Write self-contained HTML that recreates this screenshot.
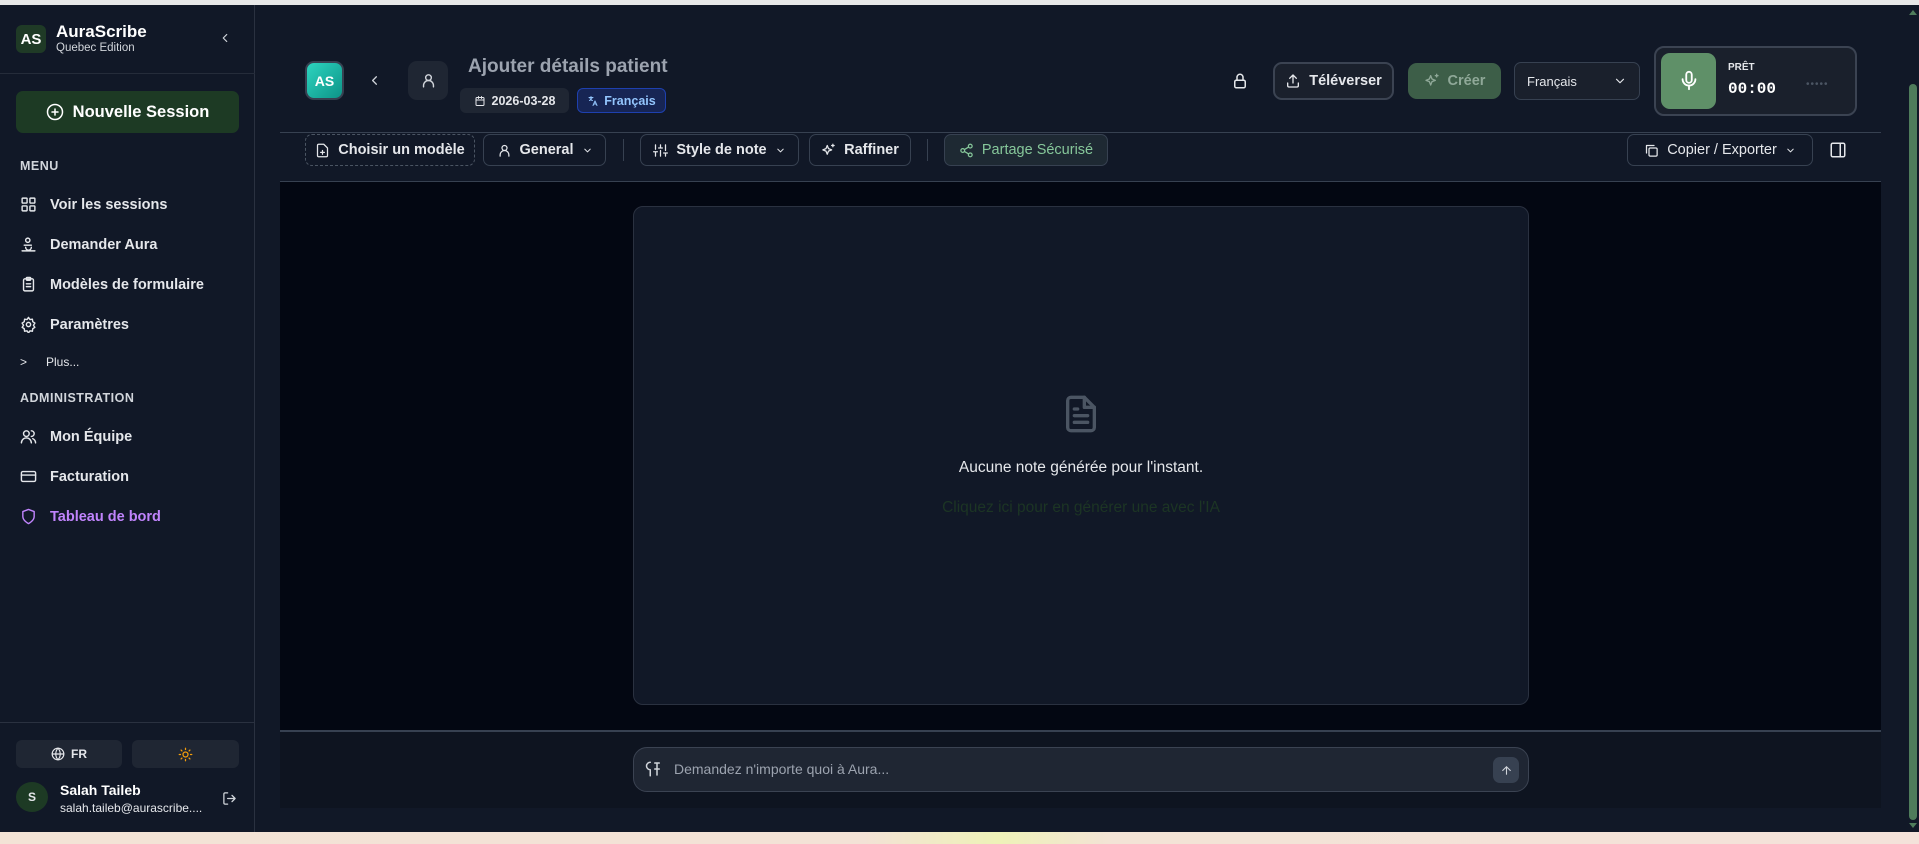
<!DOCTYPE html>
<html><head><meta charset="utf-8"><style>
*{box-sizing:border-box;margin:0;padding:0}
body{width:1919px;height:844px;overflow:hidden;background:#111827;font-family:"Liberation Sans",sans-serif;color:#e5e7eb;position:relative}
.abs{position:absolute}
svg{display:block}
.ic{stroke:currentColor;fill:none;stroke-width:2;stroke-linecap:round;stroke-linejoin:round}
.side{left:0;top:5px;width:255px;height:827px;background:#111827;border-right:1px solid #2a3140}
.nav{position:absolute;left:20px;display:flex;align-items:center;gap:13px;font-size:14.5px;font-weight:bold;color:#e5e7eb}
.sec{position:absolute;left:20px;font-size:12.5px;font-weight:bold;color:#d1d5db;letter-spacing:.5px}
.btn{position:absolute;display:flex;align-items:center;justify-content:center;gap:8px;border:1px solid #374151;border-radius:7px;font-size:14.5px;font-weight:bold;color:#e5e7eb;background:#111827}
</style></head><body>
<div class="abs" style="left:0;top:0;width:1919px;height:5px;background:#e8e8e8"></div>
<div class="abs" style="left:0;top:832px;width:1919px;height:12px;background:linear-gradient(90deg,#f3e3d6 0%,#f3e2d6 45%,#eef2b8 52%,#f3e3d6 58%,#f4e2da 100%)"></div>

<div class="abs side">
 <div class="abs" style="left:16px;top:20px;width:30px;height:28px;background:#1f3a26;border-radius:6px;color:#fff;font-weight:bold;font-size:15px;display:flex;align-items:center;justify-content:center">AS</div>
 <div class="abs" style="left:56px;top:17px;font-size:17px;font-weight:bold;color:#fff">AuraScribe</div>
 <div class="abs" style="left:56px;top:37px;font-size:11.5px;color:#d1d5db">Quebec Edition</div>
 <svg class="abs ic" style="left:218px;top:26px;color:#d1d5db" width="14" height="14" viewBox="0 0 24 24"><path d="M15 18l-6-6 6-6"/></svg>
 <div class="abs" style="left:0;top:68px;width:255px;height:1px;background:#252c3a"></div>
 <div class="abs" style="left:16px;top:86px;width:223px;height:42px;background:#1d3a24;border-radius:7px;display:flex;align-items:center;justify-content:center;gap:9px;font-size:16.5px;font-weight:bold;color:#fff">
  <svg class="ic" width="18" height="18" viewBox="0 0 24 24"><circle cx="12" cy="12" r="10"/><path d="M12 8v8M8 12h8"/></svg>Nouvelle Session</div>
 <div class="sec" style="top:154px">MENU</div>
 <div class="nav" style="top:191px"><svg class="ic" width="17" height="17" viewBox="0 0 24 24"><rect x="3" y="3" width="7" height="7" rx="1"/><rect x="14" y="3" width="7" height="7" rx="1"/><rect x="3" y="14" width="7" height="7" rx="1"/><rect x="14" y="14" width="7" height="7" rx="1"/></svg>Voir les sessions</div>
 <div class="nav" style="top:231px"><svg class="ic" width="17" height="17" viewBox="0 0 24 24"><circle cx="11" cy="6" r="3"/><path d="M6 13h10M3 21h18M8 16a4 4 0 0 0 8 0"/></svg>Demander Aura</div>
 <div class="nav" style="top:271px"><svg class="ic" width="17" height="17" viewBox="0 0 24 24"><rect x="5" y="4" width="14" height="17" rx="2"/><rect x="9" y="2" width="6" height="4" rx="1"/><path d="M9 11h6M9 15h6"/></svg>Modèles de formulaire</div>
 <div class="nav" style="top:311px"><svg class="ic" width="17" height="17" viewBox="0 0 24 24"><circle cx="12" cy="12" r="3"/><path d="M12 2l2 3 3.5-.5.5 3.5 3 2-2 3 2 3-3 2-.5 3.5-3.5-.5-2 3-2-3-3.5.5-.5-3.5-3-2 2-3-2-3 3-2 .5-3.5 3.5.5z"/></svg>Paramètres</div>
 <div class="nav" style="top:350px;font-size:12px;font-weight:normal;gap:19px"><span style="font-size:12px">&gt;</span>Plus...</div>
 <div class="sec" style="top:386px">ADMINISTRATION</div>
 <div class="nav" style="top:423px"><svg class="ic" width="17" height="17" viewBox="0 0 24 24"><circle cx="9" cy="8" r="4"/><path d="M2 21a7 7 0 0 1 14 0M16 4a4 4 0 0 1 0 8M22 21a7 7 0 0 0-4-6"/></svg>Mon Équipe</div>
 <div class="nav" style="top:463px"><svg class="ic" width="17" height="17" viewBox="0 0 24 24"><rect x="2" y="5" width="20" height="14" rx="2"/><path d="M2 10h20"/></svg>Facturation</div>
 <div class="nav" style="top:503px;color:#c084fc"><svg class="ic" width="17" height="17" viewBox="0 0 24 24"><path d="M12 22s8-4 8-10V5l-8-3-8 3v7c0 6 8 10 8 10z"/></svg>Tableau de bord</div>
 <div class="abs" style="left:0;top:717px;width:255px;height:1px;background:#2a3140"></div>
 <div class="abs" style="left:16px;top:735px;width:106px;height:28px;background:#1f2633;border-radius:6px;display:flex;align-items:center;justify-content:center;gap:6px;font-size:12px;font-weight:bold"><svg class="ic" width="14" height="14" viewBox="0 0 24 24"><circle cx="12" cy="12" r="10"/><path d="M2 12h20M12 2a15 15 0 0 1 0 20M12 2a15 15 0 0 0 0 20"/></svg>FR</div>
 <div class="abs" style="left:132px;top:735px;width:107px;height:28px;background:#1f2633;border-radius:6px;display:flex;align-items:center;justify-content:center;color:#f59e0b"><svg class="ic" width="15" height="15" viewBox="0 0 24 24"><circle cx="12" cy="12" r="4"/><path d="M12 2v2M12 20v2M4.9 4.9l1.4 1.4M17.7 17.7l1.4 1.4M2 12h2M20 12h2M4.9 19.1l1.4-1.4M17.7 6.3l1.4-1.4"/></svg></div>
 <div class="abs" style="left:16px;top:777px;width:32px;height:30px;border-radius:50%;background:#1d3a24;font-size:12px;font-weight:bold;display:flex;align-items:center;justify-content:center">S</div>
 <div class="abs" style="left:60px;top:777px;font-size:14px;font-weight:bold;color:#fff">Salah Taileb</div>
 <div class="abs" style="left:60px;top:796px;font-size:12px;color:#e5e7eb">salah.taileb@aurascribe....</div>
 <svg class="abs ic" style="left:222px;top:786px;color:#d1d5db" width="15" height="15" viewBox="0 0 24 24"><path d="M9 21H5a2 2 0 0 1-2-2V5a2 2 0 0 1 2-2h4M16 17l5-5-5-5M21 12H9"/></svg>
</div>

<!-- main -->
<div class="abs" style="left:280px;top:132px;width:1601px;height:1px;background:#374151"></div>
<div class="abs" style="left:305px;top:61px;width:39px;height:39px;border-radius:9px;background:linear-gradient(135deg,#2dd4bf,#0d9488);border:2px solid #374151;color:#fff;font-weight:bold;font-size:14px;display:flex;align-items:center;justify-content:center">AS</div>
<svg class="abs ic" style="left:367px;top:73px;color:#d1d5db" width="15" height="15" viewBox="0 0 24 24"><path d="M15 18l-6-6 6-6"/></svg>
<div class="abs" style="left:408px;top:61px;width:40px;height:39px;border-radius:9px;background:#1f2633;display:flex;align-items:center;justify-content:center;color:#d1d5db"><svg class="ic" width="17" height="17" viewBox="0 0 24 24"><circle cx="12" cy="8" r="4"/><path d="M5 21v-2a7 7 0 0 1 14 0v2"/></svg></div>
<div class="abs" style="left:468px;top:56px;font-size:19px;font-weight:bold;color:#9ca3af">Ajouter détails patient</div>
<div class="abs" style="left:460px;top:88px;width:109px;height:25px;border-radius:6px;background:#1f2633;display:flex;align-items:center;justify-content:center;gap:6px;font-size:12.5px;font-weight:bold;color:#e5e7eb"><svg class="ic" width="12" height="12" viewBox="0 0 24 24"><rect x="4" y="5" width="16" height="16" rx="2"/><path d="M4 10h16M9 3v4M15 3v4"/></svg>2026-03-28</div>
<div class="abs" style="left:577px;top:88px;width:89px;height:25px;border-radius:6px;background:#172554;border:1px solid #1e40af;display:flex;align-items:center;justify-content:center;gap:5px;font-size:12.5px;font-weight:bold;color:#93c5fd"><svg class="ic" width="12" height="12" viewBox="0 0 24 24"><path d="M4 5h8M8 3v2M5 11c3-1 5-4 5-6M6 6c1 3 3 5 5 5M12 21l4-9 4 9M13.5 18h5"/></svg>Français</div>

<svg class="abs ic" style="left:1231px;top:72px;color:#e5e7eb" width="18" height="18" viewBox="0 0 24 24"><rect x="5" y="11" width="14" height="10" rx="2"/><path d="M8 11V7a4 4 0 0 1 8 0v4"/></svg>
<div class="btn" style="left:1273px;top:62px;width:121px;height:38px;border:2px solid #3b4352;border-radius:9px;background:#1a202c"><svg class="ic" width="16" height="16" viewBox="0 0 24 24"><path d="M4 15v4a2 2 0 0 0 2 2h12a2 2 0 0 0 2-2v-4M12 3v12M7 8l5-5 5 5"/></svg>Téléverser</div>
<div class="btn" style="left:1408px;top:63px;width:93px;height:36px;border:none;border-radius:9px;background:#3d5e48;color:#8fa898"><svg class="ic" width="16" height="16" viewBox="0 0 24 24"><path d="M10 4l2 5 5 2-5 2-2 5-2-5-5-2 5-2zM19 2v4M17 4h4"/></svg>Créer</div>
<div class="btn" style="left:1514px;top:62px;width:126px;height:38px;background:#1a202c;justify-content:space-between;padding:0 12px;font-size:13px;font-weight:normal;border-radius:7px">Français<svg class="ic" width="14" height="14" viewBox="0 0 24 24"><path d="M6 9l6 6 6-6"/></svg></div>
<div class="abs" style="left:1654px;top:46px;width:203px;height:70px;border:2px solid #3b4352;border-radius:10px;background:#1a202c"></div>
<div class="abs" style="left:1661px;top:53px;width:55px;height:56px;border-radius:9px;background:#5f9068;display:flex;align-items:center;justify-content:center;color:#fff"><svg class="ic" width="22" height="22" viewBox="0 0 24 24"><rect x="9" y="2" width="6" height="12" rx="3"/><path d="M5 10a7 7 0 0 0 14 0M12 17v4"/></svg></div>
<div class="abs" style="left:1728px;top:62px;font-size:10px;font-weight:bold;color:#e5e7eb">PRÊT</div>
<div class="abs" style="left:1728px;top:80px;font-size:16px;font-weight:bold;font-family:'Liberation Mono',monospace;color:#fff">00:00</div>
<div class="abs" style="left:1806px;top:79px;font-size:10px;color:#4b5563;letter-spacing:1px">•••••</div>

<!-- toolbar -->
<div class="btn" style="left:305px;top:134px;width:170px;height:32px;border:1px dashed #4b5563"><svg class="ic" width="15" height="15" viewBox="0 0 24 24"><path d="M14 2H6a2 2 0 0 0-2 2v16a2 2 0 0 0 2 2h12a2 2 0 0 0 2-2V8z"/><path d="M12 12v6M9 15h6"/></svg>Choisir un modèle</div>
<div class="btn" style="left:483px;top:134px;width:123px;height:32px"><svg class="ic" width="15" height="15" viewBox="0 0 24 24"><circle cx="12" cy="8" r="4"/><path d="M5 21v-2a7 7 0 0 1 14 0v2"/></svg>General<svg class="ic" width="11" height="11" viewBox="0 0 24 24"><path d="M6 9l6 6 6-6"/></svg></div>
<div class="abs" style="left:623px;top:139px;width:1px;height:22px;background:#374151"></div>
<div class="btn" style="left:640px;top:134px;width:159px;height:32px"><svg class="ic" width="15" height="15" viewBox="0 0 24 24"><path d="M4 21v-7M4 10V3M12 21v-9M12 8V3M20 21v-5M20 12V3M1 14h6M9 8h6M17 16h6"/></svg>Style de note<svg class="ic" width="11" height="11" viewBox="0 0 24 24"><path d="M6 9l6 6 6-6"/></svg></div>
<div class="btn" style="left:809px;top:134px;width:102px;height:32px"><svg class="ic" width="15" height="15" viewBox="0 0 24 24"><path d="M10 4l2 5 5 2-5 2-2 5-2-5-5-2 5-2zM19 2v4M17 4h4"/></svg>Raffiner</div>
<div class="abs" style="left:927px;top:139px;width:1px;height:22px;background:#374151"></div>
<div class="btn" style="left:944px;top:134px;width:164px;height:32px;background:#1e2933;color:#86c79a;font-weight:normal"><svg class="ic" width="15" height="15" viewBox="0 0 24 24"><circle cx="18" cy="5" r="3"/><circle cx="6" cy="12" r="3"/><circle cx="18" cy="19" r="3"/><path d="M8.6 13.5l6.8 4M15.4 6.5l-6.8 4"/></svg>Partage Sécurisé</div>
<div class="btn" style="left:1627px;top:134px;width:186px;height:32px;font-weight:normal"><svg class="ic" width="15" height="15" viewBox="0 0 24 24"><rect x="8" y="8" width="13" height="13" rx="2"/><path d="M4 16V4h12"/></svg>Copier / Exporter<svg class="ic" width="11" height="11" viewBox="0 0 24 24"><path d="M6 9l6 6 6-6"/></svg></div>
<svg class="abs ic" style="left:1829px;top:141px;color:#e5e7eb" width="18" height="18" viewBox="0 0 24 24"><rect x="3" y="3" width="18" height="18" rx="2"/><path d="M15 3v18"/></svg>

<!-- editor -->
<div class="abs" style="left:280px;top:181px;width:1601px;height:549px;background:#030712;border-top:1px solid #374151"></div>
<div class="abs" style="left:633px;top:206px;width:896px;height:499px;background:#111827;border:1px solid #2a3140;border-radius:10px"></div>
<svg class="abs ic" style="left:1061px;top:393px;color:#4b5563" width="40" height="42" viewBox="0 0 24 24"><path d="M14 2H6a2 2 0 0 0-2 2v16a2 2 0 0 0 2 2h12a2 2 0 0 0 2-2V8z"/><path d="M14 2v6h6M8 13h8M8 17h8M8 9h2"/></svg>
<div class="abs" style="left:633px;top:459px;width:896px;text-align:center;font-size:15.5px;color:#e5e7eb">Aucune note générée pour l'instant.</div>
<div class="abs" style="left:633px;top:499px;width:896px;text-align:center;font-size:15.5px;color:#1c3524">Cliquez ici pour en générer une avec l'IA</div>

<!-- chat -->
<div class="abs" style="left:280px;top:730px;width:1601px;height:78px;background:#0e1420;border-top:2px solid #374151"></div>
<div class="abs" style="left:633px;top:747px;width:896px;height:45px;background:#1f2633;border:1px solid #3b4352;border-radius:14px"></div>
<svg class="abs ic" style="left:645px;top:760px;color:#d1d5db" width="18" height="18" viewBox="0 0 24 24"><path d="M7 3a5 5 0 0 0 0 10v8M13 4h6M16 4v16M13 12h6"/></svg>
<div class="abs" style="left:674px;top:761px;font-size:14px;color:#9ca3af">Demandez n'importe quoi à Aura...</div>
<div class="abs" style="left:1493px;top:757px;width:26px;height:26px;border-radius:7px;background:#374151;display:flex;align-items:center;justify-content:center;color:#d1d5db"><svg class="ic" width="13" height="13" viewBox="0 0 24 24"><path d="M12 19V5M5 12l7-7 7 7"/></svg></div>

<!-- scrollbar -->
<div class="abs" style="left:1906px;top:5px;width:13px;height:827px;background:#111827"></div>
<div class="abs" style="left:1909px;top:10px;width:0;height:0;border-left:4px solid transparent;border-right:4px solid transparent;border-bottom:5px solid #4f7c5b"></div>
<div class="abs" style="left:1909px;top:84px;width:8px;height:736px;background:#4f7c5b;border-radius:4px"></div>
<div class="abs" style="left:1909px;top:823px;width:0;height:0;border-left:4px solid transparent;border-right:4px solid transparent;border-top:5px solid #4f7c5b"></div>
</body></html>
